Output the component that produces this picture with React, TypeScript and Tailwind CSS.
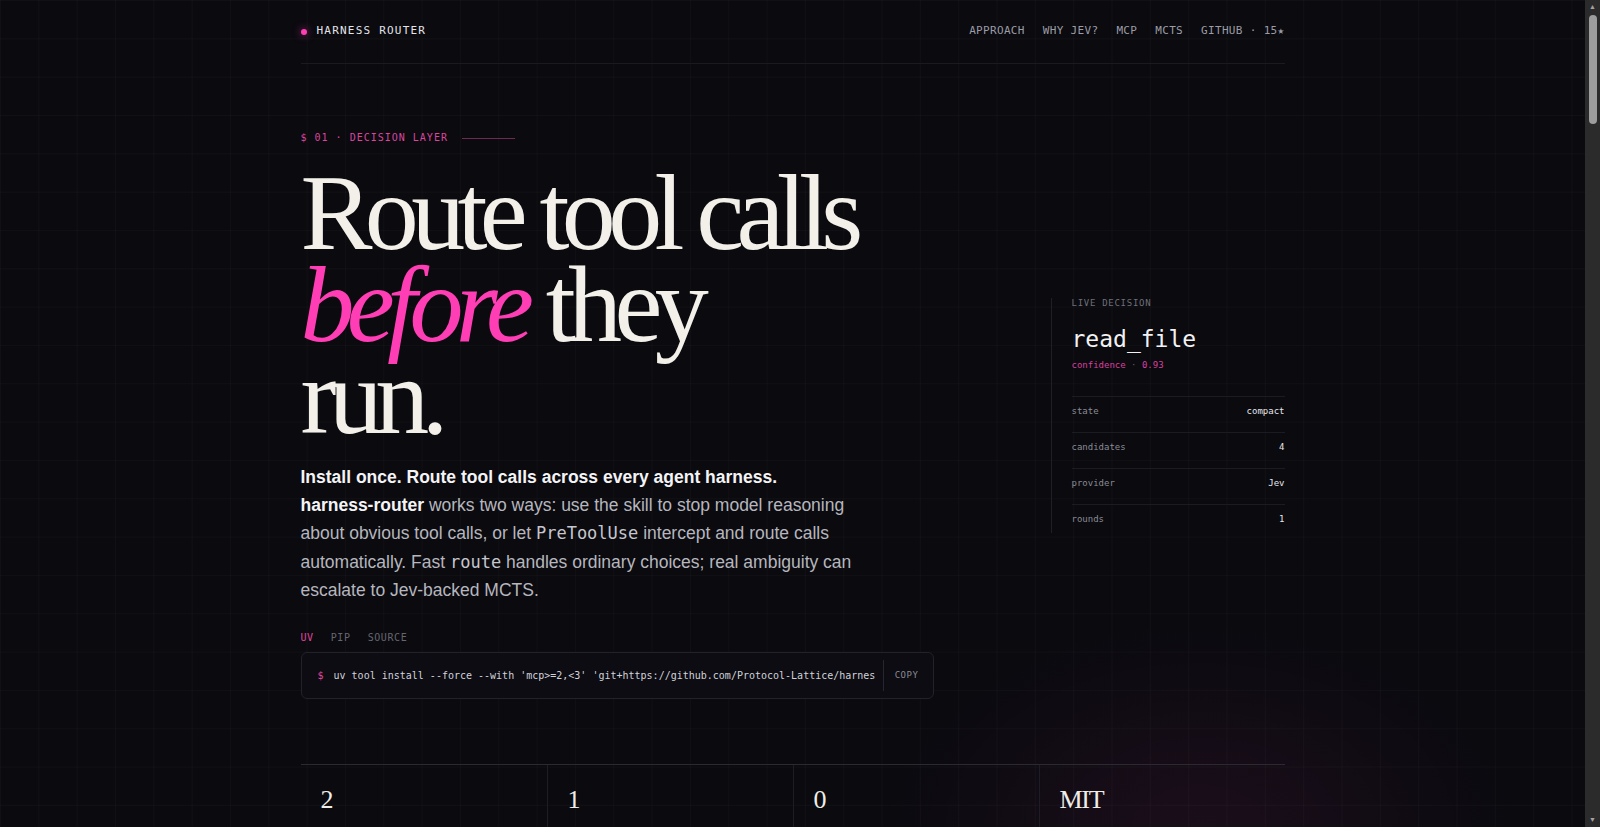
const NAV = ['APPROACH', 'WHY JEV?', 'MCP', 'MCTS']

const ROWS: [string, string][] = [
  ['state', 'compact'],
  ['candidates', '4'],
  ['provider', 'Jev'],
  ['rounds', '1'],
]

const STATS: [string, string][] = [
  ['2', 'ways to route'],
  ['1', 'install command'],
  ['0', 'api keys required'],
  ['MIT', 'license'],
]

const COMMAND = "uv tool install --force --with 'mcp>=2,<3' 'git+https://github.com/Protocol-Lattice/harness-router'"

function Header() {
  return (
    <header className="flex h-[64px] items-center justify-between border-b border-[#1a1a21] font-['DejaVu_Sans_Mono',monospace]">
      <div className="flex items-center gap-[10px]">
        <span className="h-[6px] w-[6px] rounded-full bg-[#ff3eb5] shadow-[0_0_8px_rgba(255,62,181,0.7)]" />
        <span className="text-[11px] tracking-[0.11em] text-[#e4e4ea]">HARNESS ROUTER</span>
      </div>
      <nav className="flex items-center gap-[18px] text-[11px] tracking-[0.03em] text-[#9c9ca6]">
        {NAV.map((item) => (
          <a key={item} href="#">
            {item}
          </a>
        ))}
        <a href="#">GITHUB · 15★</a>
      </nav>
    </header>
  )
}

function InstallBox() {
  return (
    <div className="mt-[28px] font-['DejaVu_Sans_Mono',monospace]">
      {/* Tabs */}
      <div className="flex gap-[17px] text-[10px] leading-[12px] tracking-[0.06em]">
        <span className="text-[#e0489f]">UV</span>
        <span className="text-[#66666f]">PIP</span>
        <span className="text-[#66666f]">SOURCE</span>
      </div>

      <div className="mt-[8px] flex h-[47px] items-center rounded-[6px] border border-[#22222a] bg-[#0c0c12] pl-[16px] pr-[14px]">
        <span className="text-[10px] text-[#e0489f]">$</span>
        <span className="ml-[10px] mr-[8px] min-w-0 flex-1 overflow-hidden whitespace-nowrap text-[10px] text-[#d2d2da]">
          {COMMAND}
        </span>
        <div className="flex h-[31px] items-center border-l border-[#26262e] pl-[11px] text-[9px] tracking-[0.06em] text-[#8a8a94]">
          COPY
        </div>
      </div>
    </div>
  )
}

function LiveDecision() {
  return (
    <aside className="w-[234px] border-l border-[#1f1f27] pl-[20px] font-['DejaVu_Sans_Mono',monospace]">
      <p className="text-[9px] leading-[10px] tracking-[0.08em] text-[#6f6f79]">LIVE DECISION</p>
      <p className="mt-[17px] text-[23px] leading-[28px] text-[#f2f2f4]">read_file</p>
      <p className="mt-[6px] text-[9px] leading-[12px] text-[#d9409f]">
        confidence <span className="text-[#5c5c66]">·</span> 0.93
      </p>

      <div className="mt-[25px] flex flex-col gap-[7px]">
        {ROWS.map(([label, value]) => (
          <div key={label} className="flex items-center justify-between border-t border-[#1b1b22] pb-[8px] pt-[8px] text-[9px] leading-[12px]">
            <span className="text-[#8b8b95]">{label}</span>
            <span className="text-[#e6e6ec]">{value}</span>
          </div>
        ))}
      </div>
    </aside>
  )
}

function Hero() {
  return (
    <section className="flex items-center justify-between pt-[68px]">
      <div className="w-[633px]">
        {/* Eyebrow */}
        <div className="flex items-center font-['DejaVu_Sans_Mono',monospace] text-[10px] leading-[12px] tracking-[0.1em] text-[#d9469f]">
          <span>$ 01 · DECISION LAYER</span>
          <span className="ml-[14px] h-px w-[53px] bg-[#6d2a55]" />
        </div>

        <h1 className="mt-[23px] font-['Liberation_Serif',serif] text-[108px] font-normal leading-[0.85] tracking-[-0.071em] text-[#f3f0ea]">
          Route tool calls
          <br />
          <em className="text-[#ff3eb5]">before</em> they
          <br />
          run.
        </h1>

        <p className="mt-[21px] max-w-[572px] font-['Liberation_Sans',Arial,sans-serif] text-[17.5px] leading-[1.6] text-[#b6b6be]">
          <strong className="font-bold text-[#f4f4f6]">Install once. Route tool calls across every agent harness.</strong>{' '}
          <strong className="whitespace-nowrap font-bold text-[#f4f4f6]">harness-router</strong> works two ways: use the skill to stop
          model reasoning about obvious tool calls, or let{' '}
          <code className="font-['DejaVu_Sans_Mono',monospace] text-[17px] text-[#c6c6ce]">PreToolUse</code> intercept and route calls
          automatically. Fast <code className="font-['DejaVu_Sans_Mono',monospace] text-[17px] text-[#c6c6ce]">route</code> handles
          ordinary choices; real ambiguity can escalate to Jev-backed MCTS.
        </p>

        <InstallBox />
      </div>

      <LiveDecision />
    </section>
  )
}

function Stats() {
  return (
    <section className="mt-[65px] grid grid-cols-4 border-t border-[#2a2a32]">
      {STATS.map(([value, label], i) => (
        <div key={label} className={`pb-[40px] pl-[20px] pt-[22px] ${i > 0 ? 'border-l border-[#1d1d25]' : ''}`}>
          <p className="font-['Liberation_Serif',serif] text-[26px] leading-none tracking-[-0.05em] text-[#f0ede8]">{value}</p>
          <p className="mt-[16px] font-['DejaVu_Sans_Mono',monospace] text-[9px] uppercase tracking-[0.1em] text-[#6f6f79]">{label}</p>
        </div>
      ))}
    </section>
  )
}

function Approach() {
  return (
    <section className="border-t border-[#1a1a21] pb-[200px] pt-[120px]">
      <div className="flex items-center font-['DejaVu_Sans_Mono',monospace] text-[10px] tracking-[0.1em] text-[#d9469f]">
        <span>$ 02 · APPROACH</span>
        <span className="ml-[14px] h-px w-[53px] bg-[#6d2a55]" />
      </div>
      <h2 className="mt-[25px] font-['Liberation_Serif',serif] text-[64px] leading-[0.9] tracking-[-0.05em] text-[#f3f0ea]">
        Two ways in.
        <br />
        <em className="text-[#ff3eb5]">One</em> decision layer.
      </h2>
      <p className="mt-[24px] max-w-[572px] font-['Liberation_Sans',Arial,sans-serif] text-[17.5px] leading-[1.6] text-[#b6b6be]">
        The skill keeps the model from deliberating over calls that are obvious. The hook catches every call before it runs and
        picks the right tool for the job.
      </p>
    </section>
  )
}

// window scrollbar as it shows in the capture
function Scrollbar() {
  return (
    <div className="pointer-events-none fixed right-0 top-0 flex h-screen w-[15px] flex-col items-center bg-[#2b2b2b]">
      <span className="mt-[3px] text-[7px] leading-[8px] text-[#a3a3a3]">▲</span>
      <span className="mt-[4px] h-[109px] w-[8px] rounded-full bg-[#9d9d9d]" />
      <span className="mb-[3px] mt-auto text-[7px] leading-[8px] text-[#a3a3a3]">▼</span>
    </div>
  )
}

export default function App() {
  return (
    <div className="relative min-h-screen overflow-hidden bg-[#0a0a0f] bg-[linear-gradient(to_right,rgba(255,255,255,0.025)_1px,transparent_1px),linear-gradient(to_bottom,rgba(255,255,255,0.025)_1px,transparent_1px)] bg-[size:38.33px_38.33px] pr-[15px]">
      {/* bottom-right glow */}
      <div className="pointer-events-none absolute left-[880px] top-[620px] h-[420px] w-[640px] bg-[radial-gradient(closest-side,rgba(255,60,180,0.07),transparent)]" />

      <div className="relative mx-auto max-w-[984px]">
        <Header />
        <Hero />
        <Stats />
        <Approach />
      </div>

      <Scrollbar />
    </div>
  )
}
